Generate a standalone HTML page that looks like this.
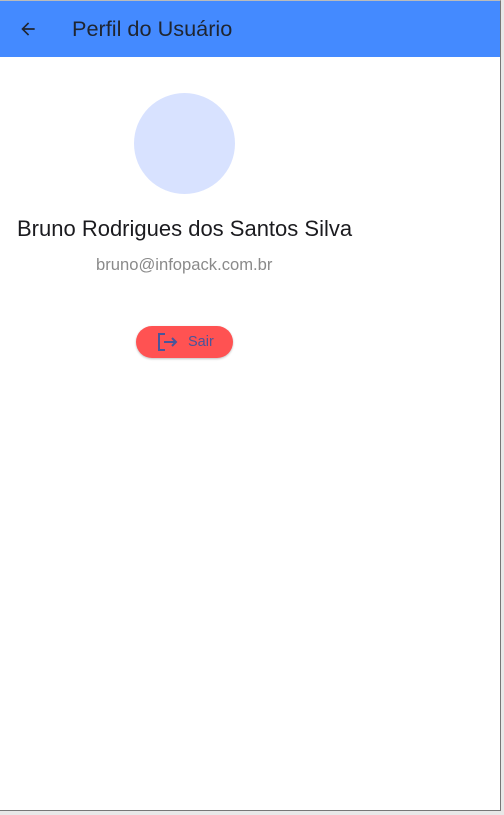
<!DOCTYPE html>
<html><head><meta charset="utf-8"><style>
body{margin:0;width:504px;height:815px;background:#e8e8e8;position:relative;overflow:hidden;font-family:"Liberation Sans",Roboto,sans-serif}
.app{position:absolute;left:0;top:0;width:500px;height:809px;background:#fff;border-right:1px solid #777;border-bottom:1px solid #777;border-top:1px solid #bbb}
.bar{position:absolute;left:0;top:0;width:500px;height:56px;background:#448aff}
.bar .t{position:absolute;left:72px;top:15px;font-size:21.7px;color:#1f2530}
.av{position:absolute;left:134px;top:92px;width:101px;height:101px;border-radius:50%;background:#d8e2ff}
.name{position:absolute;left:17px;top:215px;font-size:22px;color:#1b1b1f}
.mail{position:absolute;left:96px;top:254px;font-size:16.6px;color:#8a8a8a}
.btn{position:absolute;left:136px;top:325px;width:97px;height:32px;border-radius:16px;background:#ff5252;box-shadow:0 1px 2px rgba(0,0,0,.25)}
.btn span{position:absolute;left:52px;top:8px;font-size:14.5px;color:#4a559a}
</style></head><body>
<div class="app">
<div class="bar">
<svg style="position:absolute;left:18px;top:18px" width="20" height="20" viewBox="0 0 24 24"><path d="M20 11H7.8l5.6-5.6L12 4l-8 8 8 8 1.4-1.4L7.8 13H20z" fill="#1f2530"/></svg>
<div class="t">Perfil do Usuário</div>
</div>
<div class="av"></div>
<div class="name">Bruno Rodrigues dos Santos Silva</div>
<div class="mail">bruno@infopack.com.br</div>
<div class="btn">
<svg style="position:absolute;left:21px;top:6px" width="22" height="20" viewBox="0 0 22 20"><path d="M8 2H2v16h6" fill="none" stroke="#4a559a" stroke-width="2"/><path d="M7 10h12M15 6l4 4-4 4" fill="none" stroke="#4a559a" stroke-width="2"/></svg>
<span>Sair</span>
</div>
</div>
</body></html>
